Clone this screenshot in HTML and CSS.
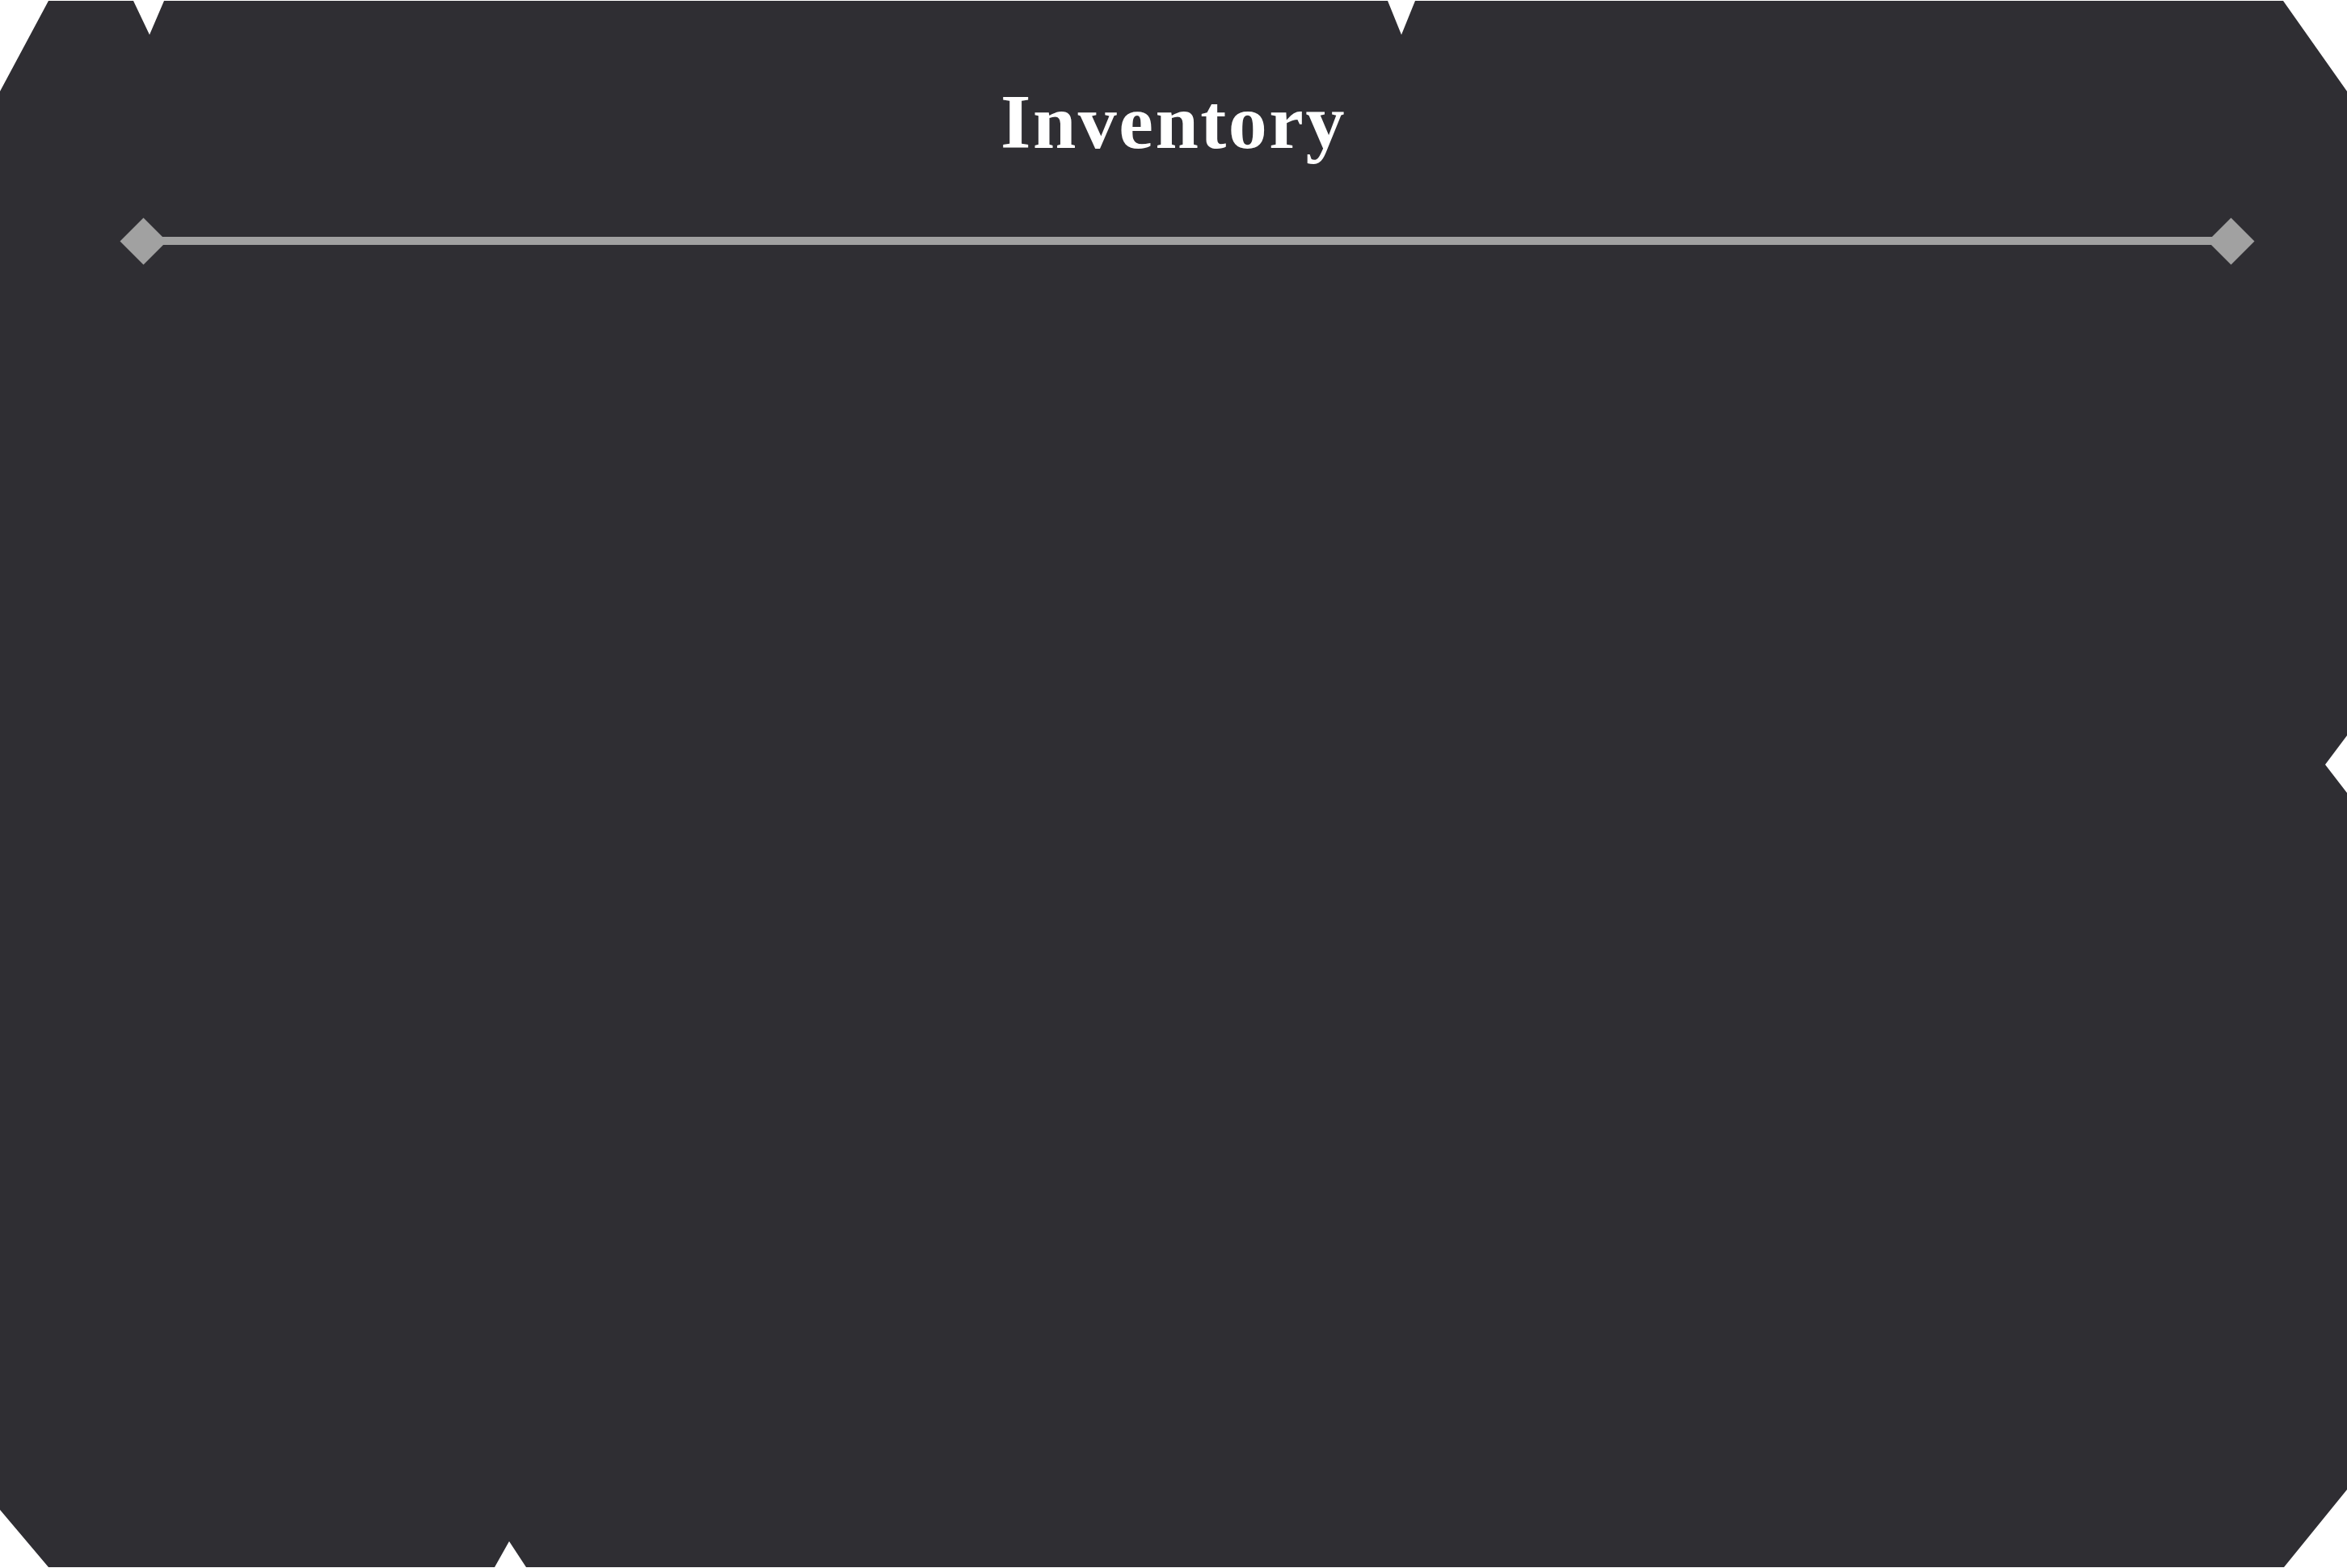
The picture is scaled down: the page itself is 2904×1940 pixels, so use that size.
FILE: index.html
```html
<!DOCTYPE html>
<html lang="en">
<head>
<meta charset="utf-8">
<title>Inventory</title>
<link rel="stylesheet" href="styles.css">
</head>
<body>
<main class="panel">
  <header class="panel-header">
    <h1 class="panel-title">Inventory</h1>
    <div class="divider">
      <span class="divider-cap"></span>
      <span class="divider-line"></span>
      <span class="divider-cap"></span>
    </div>
  </header>
  <section class="panel-body"></section>
</main>
</body>
</html>
```
FILE: styles.css
```css
html, body {
  margin: 0;
  padding: 0;
  background: #ffffff;
}

.panel {
  width: 2904px;
  height: 1940px;
  background: #2f2e33;
  display: flex;
  flex-direction: column;
  clip-path: polygon(
    60px 1px, 165px 1px, 185px 43px, 203px 1px,
    1717px 1px, 1734px 43px, 1751px 1px,
    2825px 1px, 2904px 113px,
    2904px 910px, 2877px 946px, 2904px 981px,
    2904px 1843px, 2826px 1939px,
    651px 1939px, 630px 1907px, 612px 1939px,
    60px 1939px, 0px 1868px, 0px 113px
  );
}

.panel-header {
  display: flex;
  flex-direction: column;
  align-items: stretch;
}

.panel-title {
  margin: 96px 0 0 0;
  text-align: center;
  font-family: "Liberation Serif", "Times New Roman", serif;
  font-weight: 700;
  font-size: 96px;
  line-height: 110px;
  letter-spacing: 2.5px;
  color: #ffffff;
}

.divider {
  display: flex;
  align-items: center;
  margin: 62px 117px 0 151px;
  height: 60px;
}

.divider-cap {
  flex: none;
  width: 41px;
  height: 41px;
  margin: 0 6px;
  background: #a1a1a1;
  transform: rotate(45deg);
}

.divider-line {
  flex: 1;
  height: 10px;
  margin: 0 -14px;
  background: #a1a1a1;
}

.panel-body {
  flex: 1;
}
```
